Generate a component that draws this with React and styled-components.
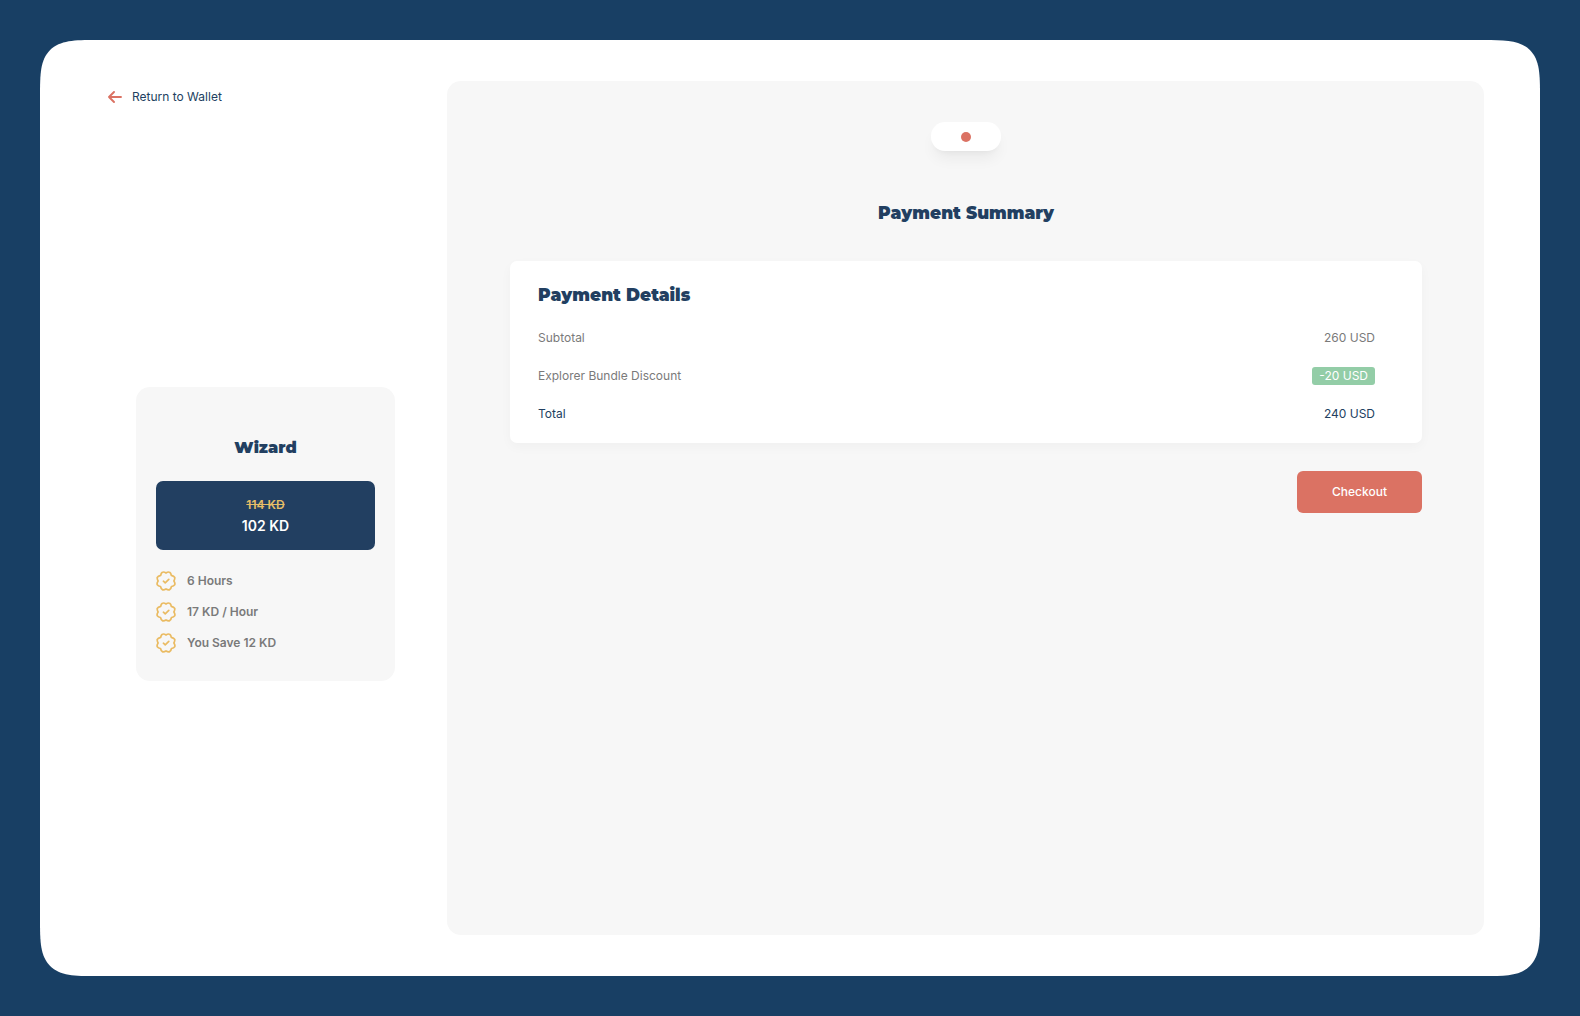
import React from "react";
import styled, { createGlobalStyle } from "styled-components";

const navy = "#223f61";
const coral = "#db7263";
const grey = "#7a7a7a";
const panel = "#f7f7f7";

const Global = createGlobalStyle`
  *, *::before, *::after { box-sizing: border-box; }
  html, body, #root { height: 100%; }
  body {
    margin: 0;
    background: #183f64;
    color: ${navy};
    font-family: Inter, "Liberation Sans", sans-serif;
    font-size: 12px;
    line-height: 18px;
  }
  h1, h2, ul, dl, dd { margin: 0; padding: 0; }
`;

const Page = styled.div`
  min-height: 100%;
  padding: 40px;
  display: flex;
`;

const Frame = styled.div`
  flex: 1;
  display: flex;
  gap: 52px;
  padding: 41px 56px 41px 68px;
  background: #fff;
  border-radius: 37px;
  @supports (corner-shape: superellipse(1.8)) {
    border-radius: 56px;
    corner-shape: superellipse(1.8);
  }
`;

const Sidebar = styled.aside`
  flex: 0 0 287px;
  display: flex;
  flex-direction: column;
`;

const BackLink = styled.a`
  display: flex;
  align-items: center;
  gap: 10px;
  padding-top: 7px;
  color: ${navy};
  text-decoration: none;
`;

const PlanArea = styled.div`
  flex: 1;
  display: flex;
  flex-direction: column;
  justify-content: center;
  padding: 27px 0 0 28px;
`;

const PlanCard = styled.section`
  padding: 49px 20px 28px;
  border-radius: 14px;
  background: ${panel};
`;

const Title = styled.h2`
  font-family: Montserrat, Inter, "Liberation Sans", sans-serif;
  font-weight: 900;
  font-size: ${(p) => p.$size || 17}px;
  line-height: 24px;
  text-align: ${(p) => p.$align || "left"};
`;

const PriceBox = styled.div`
  display: flex;
  flex-direction: column;
  align-items: center;
  justify-content: center;
  height: 69px;
  margin: 21px 0;
  border-radius: 7px;
  background: ${navy};
`;

const OldPrice = styled.s`
  color: #e6bd67;
  font-weight: 600;
  line-height: 20px;
`;

const Price = styled.strong`
  color: #fff;
  font-size: 14px;
  font-weight: 600;
  line-height: 22px;
`;

const Features = styled.ul`
  display: flex;
  flex-direction: column;
  gap: 11px;
  list-style: none;
`;

const Feature = styled.li`
  display: flex;
  align-items: center;
  gap: 11px;
  height: 20px;
  color: ${grey};
  font-weight: 600;
`;

const Main = styled.main`
  flex: 1;
  display: flex;
  flex-direction: column;
  padding: 41px 62px 41px 63px;
  border-radius: 14px;
  background: ${panel};
`;

const Steps = styled.div`
  align-self: center;
  display: flex;
  align-items: center;
  justify-content: center;
  width: 70px;
  height: 29px;
  margin-bottom: 50px;
  border-radius: 14px;
  background: #fff;
  box-shadow: 0 10px 15px -3px rgba(0, 0, 0, 0.06), 0 4px 6px -4px rgba(0, 0, 0, 0.06);
`;

const Dot = styled.span`
  width: 10px;
  height: 10px;
  border-radius: 50%;
  background: ${coral};
`;

const Details = styled.section`
  margin: 36px 0 28px;
  padding: 22px 47px 20px 28px;
  border-radius: 7px;
  background: #fff;
  box-shadow: 0 4px 12px rgba(0, 0, 0, 0.03);
`;

const Lines = styled.dl`
  display: flex;
  flex-direction: column;
  gap: 20px;
  margin-top: 22px;
`;

const Line = styled.div`
  display: flex;
  justify-content: space-between;
  color: ${(p) => (p.$total ? navy : grey)};
`;

const Badge = styled.span`
  display: block;
  padding: 0 7px;
  border-radius: 3px;
  background: #93cda7;
  color: #fff;
`;

const Checkout = styled.button`
  align-self: flex-end;
  width: 125px;
  height: 42px;
  border: 0;
  border-radius: 6px;
  background: ${coral};
  color: #fff;
  font: inherit;
  font-weight: 500;
  cursor: pointer;
`;

const ArrowIcon = () => (
  <svg width="14" height="14" viewBox="0 0 14 14" fill="none" stroke={coral} strokeWidth="1.9" strokeLinecap="round" strokeLinejoin="round" aria-hidden="true">
    <path d="M13 7H1M6 2L1 7l5 5" />
  </svg>
);

const SealIcon = () => (
  <svg width="20" height="20" viewBox="0 0 20 20" fill="none" stroke="#eabb62" strokeWidth="1.7" strokeLinecap="round" strokeLinejoin="round" aria-hidden="true">
    <path d="M10 2Q12.2 .4 13.9 1.4Q14.9 2.2 15.3 4.3Q18 4.9 18.7 6.3Q19.1 7.8 17.9 10Q19.4 12.2 18.7 13.7Q17.8 15 15.5 15.5Q15 17.8 13.7 18.6Q12.2 19.2 10 17.9Q7.8 19.2 6.3 18.6Q5 17.8 4.5 15.5Q2.2 15 1.3 13.7Q.6 12.2 2.1 10Q.9 7.8 1.3 6.3Q2 4.9 4.7 4.3Q5.1 2.2 6.1 1.4Q7.8 .4 10 2Z" />
    <path d="M7.4 10.2l1.8 1.6 3.6-3.5" />
  </svg>
);

const features = ["6 Hours", "17 KD / Hour", "You Save 12 KD"];

const lines = [
  { label: "Subtotal", value: "260 USD" },
  { label: "Explorer Bundle Discount", value: "-20 USD", discount: true },
  { label: "Total", value: "240 USD", total: true },
];

export default function App() {
  return (
    <>
      <Global />
      <Page>
        <Frame>
          <Sidebar>
            <BackLink href="#wallet">
              <ArrowIcon />
              Return to Wallet
            </BackLink>
            <PlanArea>
              <PlanCard>
                <Title $align="center" $size={16}>Wizard</Title>
                <PriceBox>
                  <OldPrice>114 KD</OldPrice>
                  <Price>102 KD</Price>
                </PriceBox>
                <Features>
                  {features.map((text) => (
                    <Feature key={text}>
                      <SealIcon />
                      {text}
                    </Feature>
                  ))}
                </Features>
              </PlanCard>
            </PlanArea>
          </Sidebar>
          <Main>
            <Steps>
              <Dot />
            </Steps>
            <Title as="h1" $align="center">Payment Summary</Title>
            <Details>
              <Title>Payment Details</Title>
              <Lines>
                {lines.map((line) => (
                  <Line key={line.label} $total={line.total}>
                    <dt>{line.label}</dt>
                    <dd>{line.discount ? <Badge>{line.value}</Badge> : line.value}</dd>
                  </Line>
                ))}
              </Lines>
            </Details>
            <Checkout type="button">Checkout</Checkout>
          </Main>
        </Frame>
      </Page>
    </>
  );
}
